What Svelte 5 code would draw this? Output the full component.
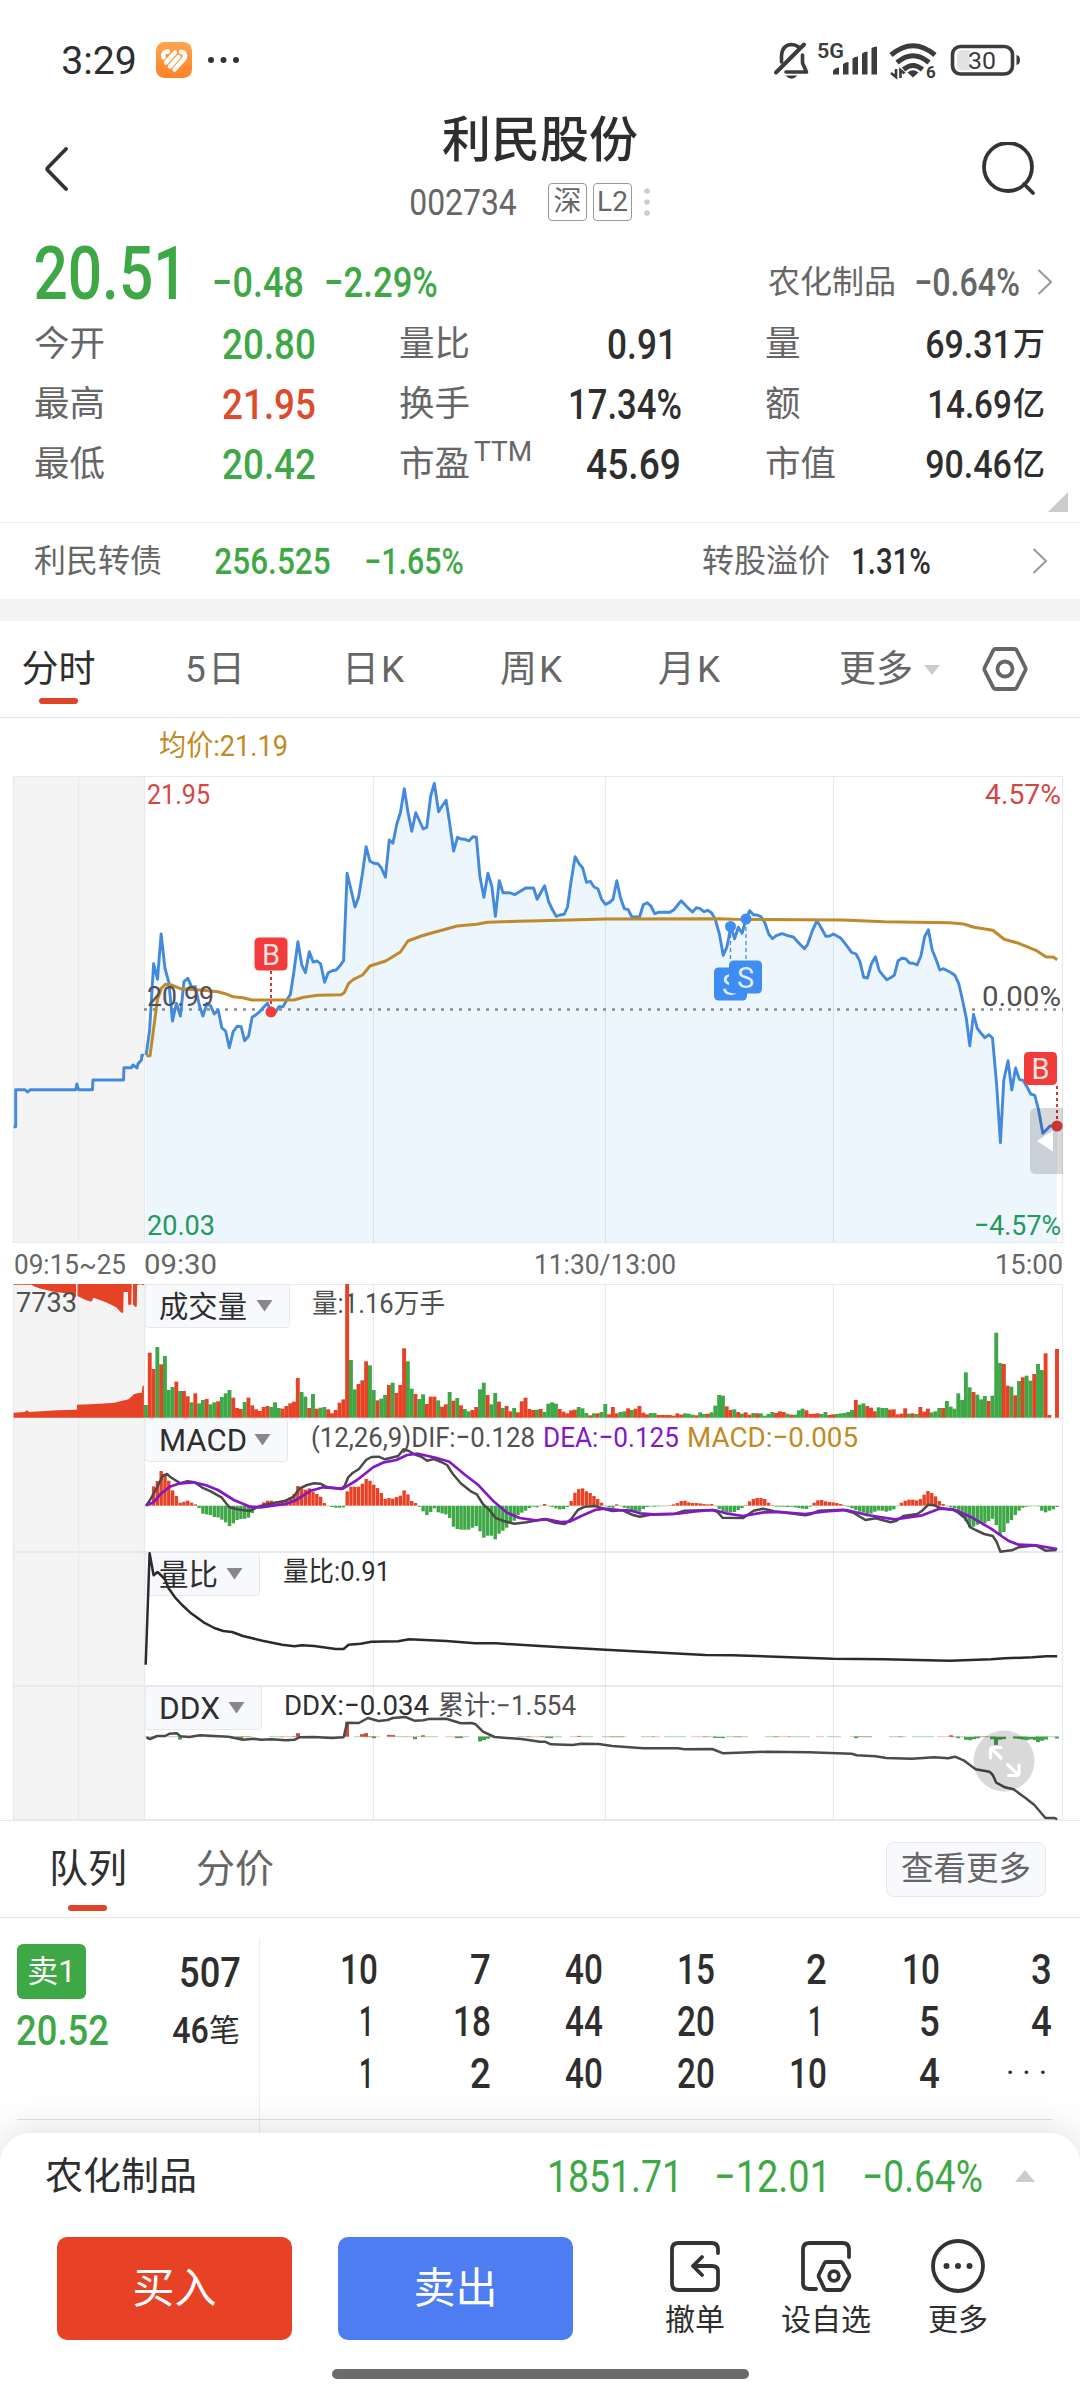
<!-- Script -->
<script>
    // [label, value, unit, digit width, tone, right inset]
    const quotes = [
        ['今开', '20.80', '', 92, 'down', 0],
        ['量比', '0.91', '', 68, 'dark', 5],
        ['量', '69.31', '万', 85, 'dark', 0],
        ['最高', '21.95', '', 92, 'up', 0],
        ['换手', '17.34%', '', 112, 'dark', 0],
        ['额', '14.69', '亿', 83, 'dark', 0],
        ['最低', '20.42', '', 92, 'down', 0],
        ['市盈', '45.69', '', 93, 'dark', 1],
        ['市值', '90.46', '亿', 85, 'dark', 0],
    ];

    const periods = ['分时', '5日', '日K', '周K', '月K'];

    const orders = [
        '10', '7', '40', '15', '2', '10', '3',
        '1', '18', '44', '20', '1', '5', '4',
        '1', '2', '40', '20', '10', '4', '···',
    ];

    // Traces are kept per half of the session: x/y of the origin, then the scale
    const AM = 2.8;
    const PM = 2.904;

    const trace = (str, x0, y0, k) => str.trim().split(/\s+/).map((pair) => {
        const [x, y] = pair.split(',').map(Number);
        return `${(x0 + x / k).toFixed(1)},${(y0 + y / 3).toFixed(1)}`;
    });

    const line = (am, pm, y0) => [...trace(am, 0, y0, AM), ...trace(pm, 540, y0, PM)].join(' ');

    const price = line(`
        409,886 419,810 430,611 441,658 451,522 462,625 473,668 483,783 494,730 505,768 515,665 526,655
        537,682 547,680 558,735 568,768 580,730 590,738 600,762 611,750 621,803 632,814 642,863 653,815
        664,799 675,800 685,842 696,828 706,772 717,764 728,754 738,742 749,730 759,756 770,758 781,740
        792,740 802,722 813,703 823,635 834,545 845,615 855,638 866,575 877,606 888,603 898,612 909,667
        919,638 930,632 941,630 952,617 962,602 972,340 983,390 994,441 1004,412 1015,340 1025,260
        1036,304 1047,310 1058,311 1068,324 1079,352 1090,240 1100,250 1111,192 1121,158 1132,86 1142,155
        1153,214 1164,158 1175,183 1185,207 1195,202 1206,108 1216,70 1228,155 1238,138 1249,121 1259,188
        1270,273 1281,232 1291,237 1302,238 1313,243 1324,230 1334,232 1344,352 1355,412 1366,340 1377,378
        1387,469 1398,362 1408,398 1420,398 1430,399 1441,404 1452,397 1472,384 1494,384 1504,418 1525,377
        1536,425 1546,447`, `
        47,469 58,465 70,463 80,441 91,360 102,290 113,310 124,324 135,367 146,364 157,381 168,386 179,418
        190,433 201,428 212,418 223,362 234,415 245,446 256,449 267,471 289,471 300,434 311,428 322,438
        333,461 344,457 377,457 389,449 400,435 410,422 421,434 432,446 443,456 454,443 465,446 476,455
        487,451 498,458 509,478 521,522 532,586 543,560 554,500 565,536 576,502 587,520 598,478 609,452
        620,464 631,465 642,470 653,488 664,522 675,536 686,527 703,521 719,527 736,531 752,550 768,566
        777,553 790,515 802,487 808,488 818,506 830,529 841,528 852,522 874,535 890,556 905,577 918,582
        929,604 940,652 951,654 962,612 974,590 985,632 996,646 1007,659 1018,653 1029,646 1040,602
        1051,595 1062,596 1073,609 1084,610 1095,615 1106,588 1117,530 1128,509 1139,570 1150,598 1161,630
        1172,626 1194,638 1205,646 1216,670 1227,720 1238,775 1248,857 1259,763 1270,805 1281,820 1292,833
        1304,824 1314,834 1326,972 1337,1148 1347,960 1359,902 1370,990 1381,924 1392,958 1404,962
        1414,980 1425,1002 1437,1006 1448,1050 1460,1120 1470,1110 1481,1098 1502,1098`, 760);

    const average = line(`
        410,887 420,887 431,800 441,718 452,685 463,673 480,675 505,686 560,690 610,695 630,701 652,710
        680,713 705,720 760,720 823,720 850,712 890,706 955,704 964,698 976,670 990,658 1015,645 1036,618
        1080,603 1121,576 1142,543 1180,528 1206,520 1250,507 1280,498 1335,493 1365,487 1450,484`, `
        0,482 190,477 520,476 560,478 880,480 1000,485 1190,488 1230,492 1260,502 1315,511 1348,538
        1390,550 1440,571 1470,591 1490,591 1502,599`, 760);

    const auction = trace(`
        38,1100 44,1100 44,989 70,989 77,996 85,989 212,989 215,972 220,989 259,989 260,960 346,960
        347,923 368,923 372,915 384,924 386,912 396,900 397,886 403,886`, 0, 760, AM).join(' ');

    const auctionVolume = trace(`
        38,443 38,428 68,426 75,421 82,426 160,421 215,419 216,404 270,402 320,398 360,388 375,373
        385,370 397,368 399,347 403,347 403,443`, 0, 1270, AM).join(' ');

    const auctionUnmatched = trace(`
        38,42 38,44 88,44 95,49 110,55 150,65 200,72 213,82 213,42 217,42 217,78 240,90 256,95 262,83
        300,98 325,112 340,128 345,128 346,66 358,66 359,104 368,104 369,42 372,42 372,106 376,106
        376,110 383,110 384,46 392,42 403,46 403,42`, 0, 1270, AM).join(' ');

    const dif = line(`
        409,707 420,690 441,650 455,618 468,612 478,622 490,630 505,640 525,634 545,637 565,652 590,664
        620,682 642,712 665,718 698,723 720,712 750,702 800,692 822,680 838,656 860,645 880,640 897,641
        915,651 955,657 965,648 975,622 988,608 1005,597 1025,570 1040,561 1060,560 1078,568 1095,563
        1115,558 1130,538 1145,543 1160,553 1180,560 1196,572 1215,567 1235,576 1252,585 1268,612 1290,640
        1320,665 1335,673 1352,702 1372,722 1388,744 1410,753 1440,761 1475,757`, `
        0,749 14,747 45,758 72,762 90,748 110,720 130,710 160,708 185,716 210,723 240,721 270,735 290,740
        320,734 390,732 420,722 500,720 515,725 530,743 590,744 620,722 648,716 680,724 770,736 785,733
        810,722 880,719 910,728 945,750 975,745 1018,757 1035,752 1055,738 1095,732 1110,722 1128,704
        1145,706 1165,715 1200,720 1215,728 1235,745 1250,772 1265,780 1290,792 1315,798 1326,815 1337,845
        1352,843 1370,841 1390,832 1440,826 1468,842 1500,840`, 1270);

    const dea = line(`
        409,706 430,697 450,672 475,650 500,641 540,637 575,645 610,660 655,690 700,710 730,712 800,702
        830,690 870,662 905,652 960,656 1000,630 1045,592 1075,577 1110,570 1140,555 1170,551 1220,563
        1258,575 1300,613 1340,646 1380,692 1420,728 1455,744 1500,751`, `
        0,750 20,748 60,756 85,755 120,738 160,720 185,716 230,720 265,722 290,730 330,733 400,731
        450,724 505,720 540,730 590,738 650,727 700,726 770,732 830,724 890,720 950,735 1030,748 1110,736
        1160,716 1200,718 1250,740 1310,776 1340,798 1360,812 1390,824 1440,826 1502,837`, 1270);

    const ratio = line(`
        408,374 419,40 430,106 441,96 450,105 462,118 472,145 490,172 510,195 535,220 570,247 600,264
        625,273 650,276 680,288 735,302 790,314 825,319 845,316 880,318 940,327 962,327 976,314 1010,311
        1040,305 1115,304 1145,298 1250,303 1330,310 1390,310`, `
        0,318 190,329 480,345 560,346 850,356 1000,358 1190,362 1310,358 1350,355 1430,352 1470,349
        1502,349`, 1540);

    const ddx = line(`
        410,592 420,597 440,588 462,588 475,581 495,580 505,589 530,591 560,586 640,590 680,599 710,596
        730,599 760,598 800,601 825,599 838,592 880,591 930,594 962,592 972,548 1005,549 1030,534 1060,543
        1085,540 1100,534 1135,531 1160,542 1185,541 1200,537 1250,536 1290,550 1320,549 1332,553 1352,575
        1385,591 1460,597`, `
        0,605 14,605 32,613 95,615 120,611 170,612 210,618 300,625 400,625 420,628 500,627 532,640 660,635
        780,637 905,641 920,646 975,649 1005,654 1080,656 1145,652 1185,655 1205,650 1230,661 1265,688
        1305,695 1315,705 1325,728 1350,742 1375,748 1410,774 1435,794 1468,834 1495,834 1502,838`, 1540);

    // One bar per minute, r = up, g = down
    const minuteX = (i) => 146 + i * 3.796;

    const volume = `
        g405 r248 r297 g231 r283 g258 g360 g351 r335 g363 r363 r379 g397 r370 g400 g390 r387 g403 g397 r394
        g381 g370 g360 r383 r414 r417 g396 r383 r406 r418 r423 r411 r408 g411 g397 g414 r416 r408 r400 r395
        r324 g366 g380 r414 g372 r416 g413 g411 r418 r430 r420 r398 r388 r42 g270 g358 r342 r331 r274 g286
        g360 r391 g386 g375 r345 g338 r369 r345 r235 g274 g356 r372 g387 g373 r402 r380 r380 g391 r410 r403
        g366 r392 g384 r406 g417 g424 r420 r411 g358 g338 r375 g403 g369 r395 g414 r408 r424 g414 r427 r394
        r383 r417 r420 g419 r417 g426 g401 g397 g401 r417 r425 r430 r421 r419 g411 g415 g429 r436 g430 r430
        g426 g402 r433 r411 r430 g426 g424 r415 g420 r416 r408 r428 r433 g429 g429 r435 r435 r435 r435 r437
        r430 r434 g430 g431 g434 r436 g427 g432 r431 g427 g407 g375 g377 r409 r420 g418 r426 g431 r427 r434
        g429 r430 g430 g437 g432 g426 r429 r424 r426 g431 r434 g434 g421 g416 r421 r432 r431 r430 g432 g426
        r435 r433 g432 g430 g429 g426 g420 r390 g404 g400 r408 r413 r424 g412 g414 g414 r419 r418 r433 r431
        r415 g431 r430 g432 r411 r425 r416 g427 g424 g414 r414 g393 g410 g416 g370 g390 g307 g352 r366 g374
        g388 g378 r393 g377 g188 g279 r282 r347 g350 r376 g333 r322 g317 g332 r312 g282 g300 r250 r435 r443
        r237`.trim().split(/\s+/).map((bar, i) => {
        const y = 1270 + Number(bar.slice(1)) / 3;
        return { x: minuteX(i) - 2, y, h: 1417.7 - y, up: bar[0] === 'r' };
    });

    const macd = `
        707 697 649 633 603 612 632 661 678 698 695 692 698 703 714 731 733 735 741 742 749 757 768 760 750
        747 746 743 729 714 704 697 692 692 697 696 692 688 682 672 648 655 659 655 665 672 680 699 707 711
        713 713 712 664 650 650 650 641 627 632 644 654 669 687 684 686 681 677 661 673 693 699 710 724 735
        726 715 727 730 733 744 770 777 779 779 779 773 768 784 803 797 797 808 791 782 773 760 752 735 728
        722 714 710 712 708 702 707 711 715 718 717 711 693 668 657 655 664 669 678 687 698 707 712 713 703
        708 713 716 723 725 725 717 711 709 710 709 708 707 706 703 699 693 692 697 699 699 700 702 703 702
        707 717 724 726 727 726 720 714 706 694 687 684 684 687 698 706 710 710 710 711 710 712 714 716 717
        710 698 691 690 694 696 697 699 702 706 710 715 720 725 728 733 731 725 721 722 725 722 718 707 698
        692 689 689 691 687 674 663 669 679 693 702 707 712 714 728 739 753 772 770 764 760 760 753 746 765
        795 786 760 750 735 722 713 710 708 707 709 722 727 722 718 711`.trim().split(/\s+/).map((v, i) => {
        const h = (707 - Number(v)) / 3;
        return { x: minuteX(i) - 1.7, y: h > 0 ? 1505.7 - h : 1505.7, h: Math.max(Math.abs(h), 0.5), up: h > 0 };
    });

    // [x, height], positive is inflow
    const flow = [
        [347, 14.5], [362, 2.5], [366, 3.5], [298, 3.5], [389, 1.8], [393, 1.6], [423, 1.4], [579, 0.8], [951, 1.4],
        [180, -2.8], [241, -2.4], [237, -1.2], [374, -1.5], [415, -2.5], [480, -4.8], [484, -3.4], [488, -2],
        [457, -1.4], [461, -1.4], [547, -1.2], [551, -1.5], [715, -1.2], [719, -1.2], [723, -1.4], [856, -1.5],
        [958, -1.5], [966, -3], [970, -3.5], [974, -2.5], [978, -1.6], [992, -2.5], [996, -8.2], [1000, -3],
        [1004, -2.4], [1015, -1.8], [1019, -2.2], [1023, -2.8], [1027, -3.4], [1031, -2.6], [1035, -3.4],
        [1038, -5.4], [1042, -4], [1046, -2.8], [1057, -1.8],
    ];

    const gridX = [373.5, 605.5, 833.5];
</script>

<!-- Digits fitted to the given width, the box is as high as the capitals -->
{#snippet num(value, width, cap, tone, weight = 500)}
    <svg class="num {tone}" {width} height={cap}>
        <text
            x={-cap * 0.03}
            y={cap}
            font-size={cap / 0.711}
            font-weight={weight}
            textLength={width + cap * 0.06}
            lengthAdjust="spacingAndGlyphs">{value}</text>
    </svg>
{/snippet}

{#snippet label(value, x, y, width, tone, size = 28.5)}
    <text class={tone} x={x - 1} {y} font-size={size} textLength={width + 2} lengthAdjust="spacingAndGlyphs">{value}</text>
{/snippet}

{#snippet chip(value, y, width, textWidth, size)}
    <rect class="chip" x="145" {y} {width} height="43" rx="3"/>
    <text class="dark" x="159" y={y + 32.5} font-size={size} textLength={textWidth} lengthAdjust="spacingAndGlyphs">{value}</text>
    <path fill="#888" d="M{width + 112} {y + 15.5}h16l-8 11.500z"/>
{/snippet}

{#snippet marker(value, x, y, color)}
    <rect {x} {y} width="33" height="33" rx="4.500" fill={color}/>
    <text x={x + 16.5} y={y + 27} font-size="29" fill="#fff" fill-opacity=".85" text-anchor="middle">{value}</text>
{/snippet}

{#snippet chevron()}
    <svg class="chevron" width="16" height="26" viewBox="0 0 16 26"><path d="M1.500 1 14 13 1.500 25"/></svg>
{/snippet}

<!-- Contents -->
<div class="screen">
    <div class="status">
        {@render num('3:29', 74, 28, 'dark', 400)}
        <svg class="badge" width="36" height="36" viewBox="0 0 36 36">
            <defs>
                <linearGradient id="badge-fill" x1="0" y1="0" x2="0" y2="1">
                    <stop offset="0" stop-color="#ffa54f"/>
                    <stop offset="1" stop-color="#ff8126"/>
                </linearGradient>
            </defs>
            <rect width="36" height="36" rx="8.500" fill="url(#badge-fill)"/>
            <g fill="none" stroke="#fff" stroke-width="4.400" stroke-linecap="round">
                <path d="M7.500 15.500Q6 9.500 12 9.500"/>
                <path d="M10 20.500 19 10.500"/>
                <path d="M14 24.500 22.500 15"/>
                <path d="M18.500 27.500 28 17C30.500 13.500 28 9.500 25 10"/>
            </g>
        </svg>
        <svg width="32" height="6"><circle cx="3" cy="3" r="3"/><circle cx="15.500" cy="3" r="3"/><circle cx="28" cy="3" r="3"/></svg>
        <svg class="signals" width="250" height="40" viewBox="770 40 250 40">
            <g fill="none" stroke="#3c3c3c" stroke-width="3.600" stroke-linecap="round" stroke-linejoin="round">
                <path stroke-width="4" d="M776 72.500 804 44.500"/>
                <path d="M781.500 62V56Q782 45 791.500 44.500 795.500 44.500 798.500 47"/>
                <path d="M802.500 55V63L806.500 72H786"/>
                <rect x="952.500" y="46.500" width="60" height="27.500" rx="8"/>
            </g>
            <path d="M785.500 75.500h12q-6 6.500-12 0z"/>
            <text x="817" y="58" font-size="20.500" font-weight="600" textLength="27" lengthAdjust="spacingAndGlyphs">5G</text>
            <path d="M833 71q2-3.500 6-3.500v7h-6zM843 64q2.500-2 5.500-2v12.500h-5.500zM852.500 58.500q2.500-2 5.500-2v18h-5.500zM862 53.500q2.500-2 5.500-2v23h-5.500zM871.500 48q2.500-1.500 5.500-1.500v28h-5.500z"/>
            <g fill="none" stroke="#3c3c3c" stroke-width="5">
                <path d="M891 55Q913 36.500 935 55"/>
                <path d="M897 62.500Q913 49 929 62.500"/>
                <path d="M903.500 69.500Q913 61.500 922.500 69.500"/>
            </g>
            <path d="M907.500 72.500Q913 68 918.500 72.500L913 77.500z"/>
            <path fill="none" stroke="#3c3c3c" stroke-width="2.600" d="M896 69v8l-5-4M900.500 78v-8l4 3.500"/>
            <text x="926" y="78" font-size="17" font-weight="700">6</text>
            <path fill="#e2e2e2" d="M963 50h7v20.500h-7q-6 0-6-6v-8.500q0-6 6-6z"/>
            <path d="M1016.500 55q3.500 .5 3.500 5t-3.500 5z"/>
            <text x="968" y="69" font-size="24" textLength="28" lengthAdjust="spacingAndGlyphs">30</text>
        </svg>
    </div>

    <header>
        <svg width="24" height="44" viewBox="0 0 24 44"><path class="stroke" d="M22 2 4 20.500q-1.500 1.500 0 3L22 42"/></svg>
        <div class="title">
            <h1>利民股份</h1>
            <div class="code">
                {@render num('002734', 106, 26, 'mid', 400)}
                <span class="tag first">深</span>
                <span class="tag">L2</span>
                <svg class="pale" width="6" height="28"><circle cx="3" cy="3" r="2.800"/><circle cx="3" cy="14" r="2.800"/><circle cx="3" cy="25" r="2.800"/></svg>
            </div>
        </div>
        <svg width="54" height="54" viewBox="0 0 54 54"><circle class="stroke" cx="26" cy="25" r="24"/><path class="stroke" d="M42 42 51 51"/></svg>
    </header>

    <section class="last">
        {@render num('20.51', 151, 53, 'down', 500)}
        {@render num('−0.48', 90, 30, 'down', 500)}
        {@render num('−2.29%', 112, 30, 'down', 500)}
        <span class="sector">农化制品</span>
        {@render num('−0.64%', 104, 28, 'mid', 500)}
        {@render chevron()}
    </section>

    <section class="quotes">
        {#each quotes as [name, value, unit, width, tone, inset]}
            <div class="quote" style="padding-right: {inset}px">
                <span>{name}{#if name === '市盈'}<sup>TTM</sup>{/if}</span>
                <b>{@render num(value, width, unit ? 28 : 30, tone)}{unit}</b>
            </div>
        {/each}
        <i class="corner"></i>
    </section>

    <section class="bond">
        <span>利民转债</span>
        {@render num('256.525', 115, 26, 'down')}
        {@render num('−1.65%', 98, 26, 'down')}
        <span class="premium">转股溢价</span>
        {@render num('1.31%', 78, 26, 'dark')}
        {@render chevron()}
    </section>

    <nav class="periods">
        {#each periods as name, i}
            <span class:active={i === 0}>{name}</span>
        {/each}
        <span class="more">更多<i></i></span>
        <svg width="46" height="44" viewBox="0 0 46 44">
            <path class="stroke" d="M13.500 2h19q1.500 0 2.200 1.300L43.300 20.500q.7 1.500 0 3L34.700 40.700q-.7 1.300-2.200 1.300h-19q-1.500 0-2.200-1.300L2.700 23.500q-.7-1.500 0-3L11.300 3.300Q12 2 13.500 2z"/>
            <circle class="stroke" cx="23" cy="22" r="7.500"/>
        </svg>
    </nav>

    <svg class="charts" width="1080" height="1103" viewBox="0 718 1080 1103">
        <!-- Grid -->
        <path fill="#f4f4f4" d="M13 776h131.500v466H13zM13 1284h131.500v535H13z"/>
        <polygon fill="#edf5fd" points="146,1242 {price} 1057,1242"/>
        <g fill="none" stroke="#e8e9ea" stroke-width="1.200">
            <path d="M13.500 776.500h1049v466H13.500zM13.500 1284.500h1049V1819.500H13.500z"/>
            <path d="M78.500 777v465M78.500 1285v534M144.500 777v465M144.500 1285v534"/>
            <path d="M0 1820.500h1080M144 1418h919"/>
            <path stroke-width="2" d="M13 1552h1050M13 1686h1050"/>
            {#each gridX as x}
                <path stroke="#000" stroke-opacity=".08" d="M{x} 777v465M{x} 1285v534"/>
            {/each}
        </g>

        <!-- Price -->
        {@render label('均价:21.19', 160, 756, 127, 'gold', 29)}
        <path stroke="#888c90" stroke-width="2.500" stroke-dasharray="3 6" d="M144 1009.500h919"/>
        {@render label('21.95', 148, 804, 61, 'red')}
        {@render label('4.57%', 986, 804, 74, 'red')}
        {@render label('20.03', 148, 1235, 66, 'green')}
        {@render label('−4.57%', 975, 1235, 85, 'green')}
        <polyline class="blue" points={auction}/>
        <polyline class="blue" points={price}/>
        <polyline class="trace" stroke="#bf8a2c" stroke-width="3" points={average}/>
        {@render label('20.99', 148, 1006, 65, 'dim')}
        {@render label('0.00%', 983, 1006, 77, 'dim')}

        <path stroke="#d33" stroke-width="2" stroke-dasharray="3 3" d="M271 971v38M1057 1086v36"/>
        <path stroke="#3f8cf2" stroke-width="1.300" stroke-dasharray="4 3" d="M730.500 927v42M746 920v42"/>
        <circle cx="271" cy="1012" r="5.500" fill="#f23c3c"/>
        <circle cx="730.500" cy="926.500" r="5.500" fill="#3f8cf2"/>
        <circle cx="746" cy="919" r="5.500" fill="#3f8cf2"/>
        {@render marker('B', 254.5, 937.5, '#f23c3c')}
        {@render marker('S', 714, 967.5, '#3f8cf2')}
        {@render marker('S', 729, 960.5, '#3f8cf2')}
        {@render marker('B', 1024, 1052, '#f23c3c')}
        <circle cx="1057" cy="1126" r="5.500" fill="#f23c3c"/>
        <path fill-opacity=".15" fill="#000" d="M1036 1108h27v66h-27q-6 0-6-6v-54q0-6 6-6z"/>
        <path fill="#fff" d="M1037 1141l16-10.500v21z"/>

        {@render label('09:15~25', 15, 1274, 110, 'mid')}
        {@render label('09:30', 145, 1274, 71, 'mid')}
        {@render label('11:30/13:00', 535, 1274, 140, 'mid')}
        {@render label('15:00', 996, 1274, 66, 'mid')}

        <!-- Volume -->
        {@render chip('成交量', 1284.5, 144.5, 88, 29.5)}
        {@render label('量:1.16万手', 313, 1313, 131, 'dim', 27)}
        <polygon fill="#e64326" points={auctionVolume}/>
        <polygon fill="#e64326" points={auctionUnmatched}/>
        {@render label('7733', 17, 1312, 59, 'dim')}
        {#each volume as bar}
            <rect x={bar.x} y={bar.y} width="3.900" height={bar.h} fill={bar.up ? '#e64326' : '#3fa846'}/>
        {/each}

        <!-- MACD -->
        {@render chip('MACD', 1418.5, 142.5, 88, 31)}
        {@render label('(12,26,9)DIF:−0.128', 312, 1446.5, 222, 'dim')}
        {@render label('DEA:−0.125', 544, 1446.5, 134, 'violet')}
        {@render label('MACD:−0.005', 688, 1446.5, 169, 'gold')}
        {#each macd as bar}
            <rect x={bar.x} y={bar.y} width="3.400" height={bar.h} fill={bar.up ? '#e64326' : '#3fa846'}/>
        {/each}
        <polyline class="trace" stroke="#4a4a4a" stroke-width="2.500" points={dif}/>
        <polyline class="trace" stroke="#8418c4" stroke-width="2.700" points={dea}/>

        <!-- Volume ratio -->
        {@render chip('量比', 1552.5, 114.5, 59, 29.5)}
        {@render label('量比:0.91', 284, 1581, 105, 'dark', 27)}
        <polyline class="trace" stroke="#2b2b2b" stroke-width="2.500" points={ratio}/>

        <!-- DDX -->
        {@render chip('DDX', 1686.5, 116.5, 61, 31)}
        {@render label('DDX:−0.034', 285, 1714.5, 143, 'dark')}
        {@render label('累计:−1.554', 439, 1714.5, 136, 'dim', 27)}
        <path stroke="#3fa846" stroke-opacity=".45" stroke-dasharray="14 9 22 17" d="M145 1736.700h913"/>
        <path stroke="#e64326" stroke-opacity=".35" stroke-dasharray="8 31 17 26" d="M160 1736.700h850"/>
        {#each flow as [x, h]}
            <rect x={x - 2} y={1736.7 - Math.max(h, 0)} width="4" height={Math.abs(h)} fill={h > 0 ? '#d14a35' : '#43a24a'}/>
        {/each}
        <polyline class="trace" stroke="#4a4a4a" stroke-width="2.500" points={ddx}/>
        <circle cx="1004" cy="1761" r="30.500" fill="#000" fill-opacity=".15"/>
        <path fill="none" stroke="#fff" stroke-width="3.200" stroke-linecap="round" stroke-linejoin="round" d="M990.500 1758v-8q0-2.500 2.500-2.500h8M991.500 1748.500l9.500 9.500M1019 1765v8q0 2.500-2.500 2.500h-8M1018 1774.500l-10.500-10"/>
    </svg>

    <nav class="books">
        <span class="active">队列</span>
        <span>分价</span>
        <button type="button">查看更多</button>
    </nav>

    <section class="queue">
        <div class="level">
            <span class="side">卖1</span>
            {@render num('507', 60, 30, 'dark')}
            {@render num('20.52', 91, 30, 'down')}
            <b>{@render num('46', 35, 26, 'dark')}笔</b>
        </div>
        <div class="orders">
            {#each orders as order}
                {#if order === '···'}
                    <span class="rest">{order}</span>
                {:else}
                    <span class:one={order === '1'}>{@render num(order, order.length === 1 ? (order === '1' ? 13 : 19) : 36, 30, 'dark')}</span>
                {/if}
            {/each}
        </div>
    </section>
    <div class="queue-next"><i></i></div>

    <footer>
        <div class="index">
            <span>农化制品</span>
            {@render num('1851.71', 134, 32, 'down', 400)}
            {@render num('−12.01', 115, 32, 'down', 400)}
            {@render num('−0.64%', 119, 32, 'down', 400)}
            <i></i>
        </div>
        <div class="actions">
            <button type="button" class="buy">买入</button>
            <button type="button" class="sell">卖出</button>
            <div class="tool">
                <svg width="54" height="54" viewBox="0 0 54 54">
                    <path class="stroke" d="M50 14V10.500Q50 4 43.500 4H10.500Q4 4 4 10.500V44.500Q4 51 10.500 51H43.500Q50 51 50 44.500V32Q50 27 44 27H25M34 18 25 27 34 36"/>
                </svg>
                撤单
            </div>
            <div class="tool wide">
                <svg width="54" height="54" viewBox="0 0 54 54">
                    <path class="stroke" d="M50 18V10.500Q50 4 43.500 4H10.500Q4 4 4 10.500V44.500Q4 50 10.500 50H17"/>
                    <path class="stroke" d="M27.500 23h14q1.500 0 2 1L50 35.500q.7 1.500 0 3L43.500 50q-.5 1-2 1h-14q-1.500 0-2-1L20 38.500q-.7-1.500 0-3L25.500 24q.5-1 2-1z"/>
                    <circle class="stroke" cx="35" cy="37" r="4.800"/>
                </svg>
                设自选
            </div>
            <div class="tool">
                <svg width="54" height="54" viewBox="0 0 54 54">
                    <circle class="stroke" cx="27" cy="27" r="25"/>
                    <circle cx="15.500" cy="27" r="3"/><circle cx="27" cy="27" r="3"/><circle cx="38.500" cy="27" r="3"/>
                </svg>
                更多
            </div>
        </div>
        <i class="home"></i>
    </footer>
</div>

<!-- Style -->
<style>
    :global(body) {
        background: white;
    }

    .screen {
        width: 1080px;
        height: 2400px;
        overflow: hidden;
        background: white;
        color: #666;
        font-family: Roboto, "Noto Sans CJK SC", sans-serif;
        font-size: 32px;
        line-height: 1;
    }

    svg {
        display: block;
        flex-shrink: 0;
        fill: #333;
    }

    .pale { fill: #ccc; }
    .num { overflow: visible; }

    .dark { fill: #2e2e2e; }
    .mid { fill: #666; }
    .dim { fill: #505050; }
    .down { fill: #3fa846; }
    .up { fill: #dd4a2c; }
    .red { fill: #d64545; }
    .green { fill: #23995c; }
    .gold { fill: #c28a22; }
    .violet { fill: #8418c4; }

    .stroke {
        fill: none;
        stroke: #333;
        stroke-width: 3.8;
        stroke-linecap: round;
        stroke-linejoin: round;
    }

    .chevron {
        fill: none;
        stroke: #999;
        stroke-width: 2;
    }

    .status {
        display: flex;
        align-items: center;
        height: 80px;
        padding: 20px 60px 0 62px;
    }

    .badge { margin: 0 16px 0 20px; }

    .signals {
        margin-left: auto;
        overflow: visible;
        fill: #3c3c3c;
    }

    header {
        display: flex;
        align-items: center;
        justify-content: space-between;
        height: 138px;
        padding: 0 44px;
    }

    .title {
        display: flex;
        flex-direction: column;
        align-items: center;
        gap: 14px;
        height: 118px;
        padding: 4px 0 0 12px;
    }

    h1 {
        margin: 0 0 0 18px;
        color: #2e2e2e;
        font-size: 49px;
        font-weight: 500;
        line-height: 57px;
    }

    .code {
        display: flex;
        align-items: center;
        padding-right: 2px;
    }

    .tag {
        width: 37px;
        height: 36px;
        margin-right: 6px;
        border: 1.5px solid #999;
        border-radius: 4px;
        font-size: 28px;
        line-height: 35px;
        text-align: center;
    }

    .tag.first { margin-left: 32px; }
    .code .pale { margin-left: 6px; }

    .last {
        display: flex;
        align-items: flex-end;
        height: 61px;
        padding: 0 27px 0 35px;

        & .num:nth-child(2) { margin: 0 22px 2px 27px; }
        & .num:nth-child(3) { margin-bottom: 2px; }
        & .num:nth-child(5) { margin: 0 18px 3px 19px; }
        & .chevron { margin-bottom: 4px; }
    }

    .sector { margin: 0 0 1px auto; }

    .quotes {
        position: relative;
        display: grid;
        grid-template-columns: 281px 282px 280px;
        grid-auto-rows: 60px;
        column-gap: 84px;
        height: 208px;
        padding: 15px 35px 0 34px;
        border-bottom: 1px solid #eee;
        box-sizing: content-box;
    }

    .quote {
        display: flex;
        align-items: center;
        justify-content: space-between;
        font-size: 35.5px;

        & span {
            display: flex;
            padding-top: 1px;
        }

        & b {
            display: flex;
            align-items: center;
            gap: 2px;
            color: #2e2e2e;
            font-size: 32px;
            font-weight: 500;
        }
    }

    sup {
        margin: -9px 0 0 4px;
        font-size: 28px;
        line-height: 28px;
        vertical-align: top;
    }

    .corner {
        position: absolute;
        right: 12px;
        bottom: 10px;
        border-bottom: 20px solid #ccc;
        border-left: 20px solid transparent;
    }

    .bond {
        display: flex;
        align-items: center;
        height: 76px;
        padding: 0 32px 0 34px;
        border-bottom: 22px solid #f3f3f3;

        & .num:nth-child(2) { margin: 0 35px 0 53px; }
        & .num:nth-child(5) { margin: 0 102px 0 22px; }
    }

    .premium { margin-left: auto; }

    .periods {
        display: flex;
        align-items: center;
        height: 96px;
        border-bottom: 1px solid #e8e8e8;
        font-size: 37px;

        & span {
            position: relative;
            width: 158px;
            letter-spacing: 2px;
            text-align: center;
        }

        & span:first-child {
            width: 117px;
            margin-right: 20px;
            letter-spacing: 0;
        }

        & .more {
            width: 76px;
            margin-left: 69px;
            letter-spacing: 0;
        }

        & i {
            position: absolute;
            left: 86px;
            top: 14px;
            border: 8px solid transparent;
            border-top: 10px solid #ccc;
            border-bottom: 0;
        }

        & svg { margin-left: 68px; }
        & .stroke { stroke: #666; }
    }

    .active {
        color: #2e2e2e;

        &::after {
            content: "";
            position: absolute;
            left: calc(50% - 20px);
            bottom: -16px;
            width: 39px;
            height: 6px;
            border-radius: 3px;
            background: #e0452a;
        }
    }

    .charts text { font-family: Roboto, "Noto Sans CJK SC", sans-serif; }

    .chip {
        fill: #f8f9fd;
        stroke: #e6e8ec;
    }

    .trace, .blue {
        fill: none;
        stroke-linejoin: round;
    }

    .blue {
        stroke: #4389dd;
        stroke-width: 2.9;
    }

    .books {
        display: flex;
        align-items: center;
        height: 96px;
        padding: 0 34px 0 49px;
        border-bottom: 1px solid #e8e8e8;
        font-size: 39px;

        & span {
            position: relative;
            margin-right: 69px;
        }

        & .active::after { bottom: -22px; }

        & button {
            width: 160px;
            height: 55px;
            margin-left: auto;
            padding: 0;
            border: 1.5px solid #e6e8ec;
            border-radius: 8px;
            background: #f8f9fd;
            color: #666;
            font: inherit;
            font-size: 32.5px;
        }
    }

    .queue {
        display: flex;
        height: 181px;
        padding: 20px 29px 0 0;
    }

    .level {
        display: grid;
        grid-template-columns: auto auto;
        grid-template-rows: 55px 62px;
        justify-content: space-between;
        align-items: center;
        width: 223px;
        padding: 6px 19px 0 17px;
        border-right: 1px solid #eee;

        & b {
            display: flex;
            align-items: center;
            justify-content: flex-end;
            gap: 1px;
            color: #2e2e2e;
            font-size: 31px;
            font-weight: 400;
        }

        & :global(.num:nth-child(2)) { justify-self: end; }
    }

    .side {
        width: 69px;
        height: 55px;
        border-radius: 6px;
        background: #3fa846;
        color: white;
        font-size: 31px;
        line-height: 55px;
        text-align: center;
    }

    .orders {
        display: grid;
        grid-template-columns: repeat(7, 1fr);
        grid-auto-rows: 52px;
        align-items: center;
        justify-items: end;
        flex-grow: 1;
        padding: 5px 0 0 5px;
    }

    .one { margin-right: 4px; }

    .rest {
        margin-right: -4px;
        color: #2e2e2e;
        letter-spacing: 8px;
    }

    .queue-next {
        width: 1035px;
        height: 13px;
        margin-left: 17px;
        border-top: 1px solid #e2e2e2;

        & i {
            display: block;
            width: 242px;
            height: 13px;
            border-right: 1px solid #eee;
        }
    }

    footer {
        position: relative;
        height: 267px;
        border-radius: 30px 30px 0 0;
        background: white;
        box-shadow: 0 0 40px rgba(0, 0, 0, 0.15);
    }

    .index {
        display: flex;
        align-items: center;
        gap: 33px;
        height: 86px;
        padding: 0 45px;
        color: #2e2e2e;
        font-size: 38px;

        & span { margin-right: auto; }

        & i {
            border: 10px solid transparent;
            border-top: 0;
            border-bottom: 12px solid #ccc;
        }
    }

    .actions {
        display: flex;
        height: 103px;
        margin-top: 18px;
        padding-left: 57px;

        & button {
            width: 235px;
            margin-right: 46px;
            border: none;
            border-radius: 10px;
            color: white;
            font: inherit;
            font-size: 42px;
        }
    }

    .buy { background: #e74225; }
    .sell { background: #4d7df0; }

    .tool {
        display: flex;
        flex-direction: column;
        align-items: center;
        gap: 12px;
        width: 110px;
        margin: 2px 0 0 21px;
        color: #2e2e2e;
        font-size: 30px;

        &.wide { margin-right: 1px; }
    }

    .home {
        display: block;
        width: 417px;
        height: 10px;
        margin: 29px auto 0;
        border-radius: 5px;
        background: #6b6b6b;
    }
</style>
